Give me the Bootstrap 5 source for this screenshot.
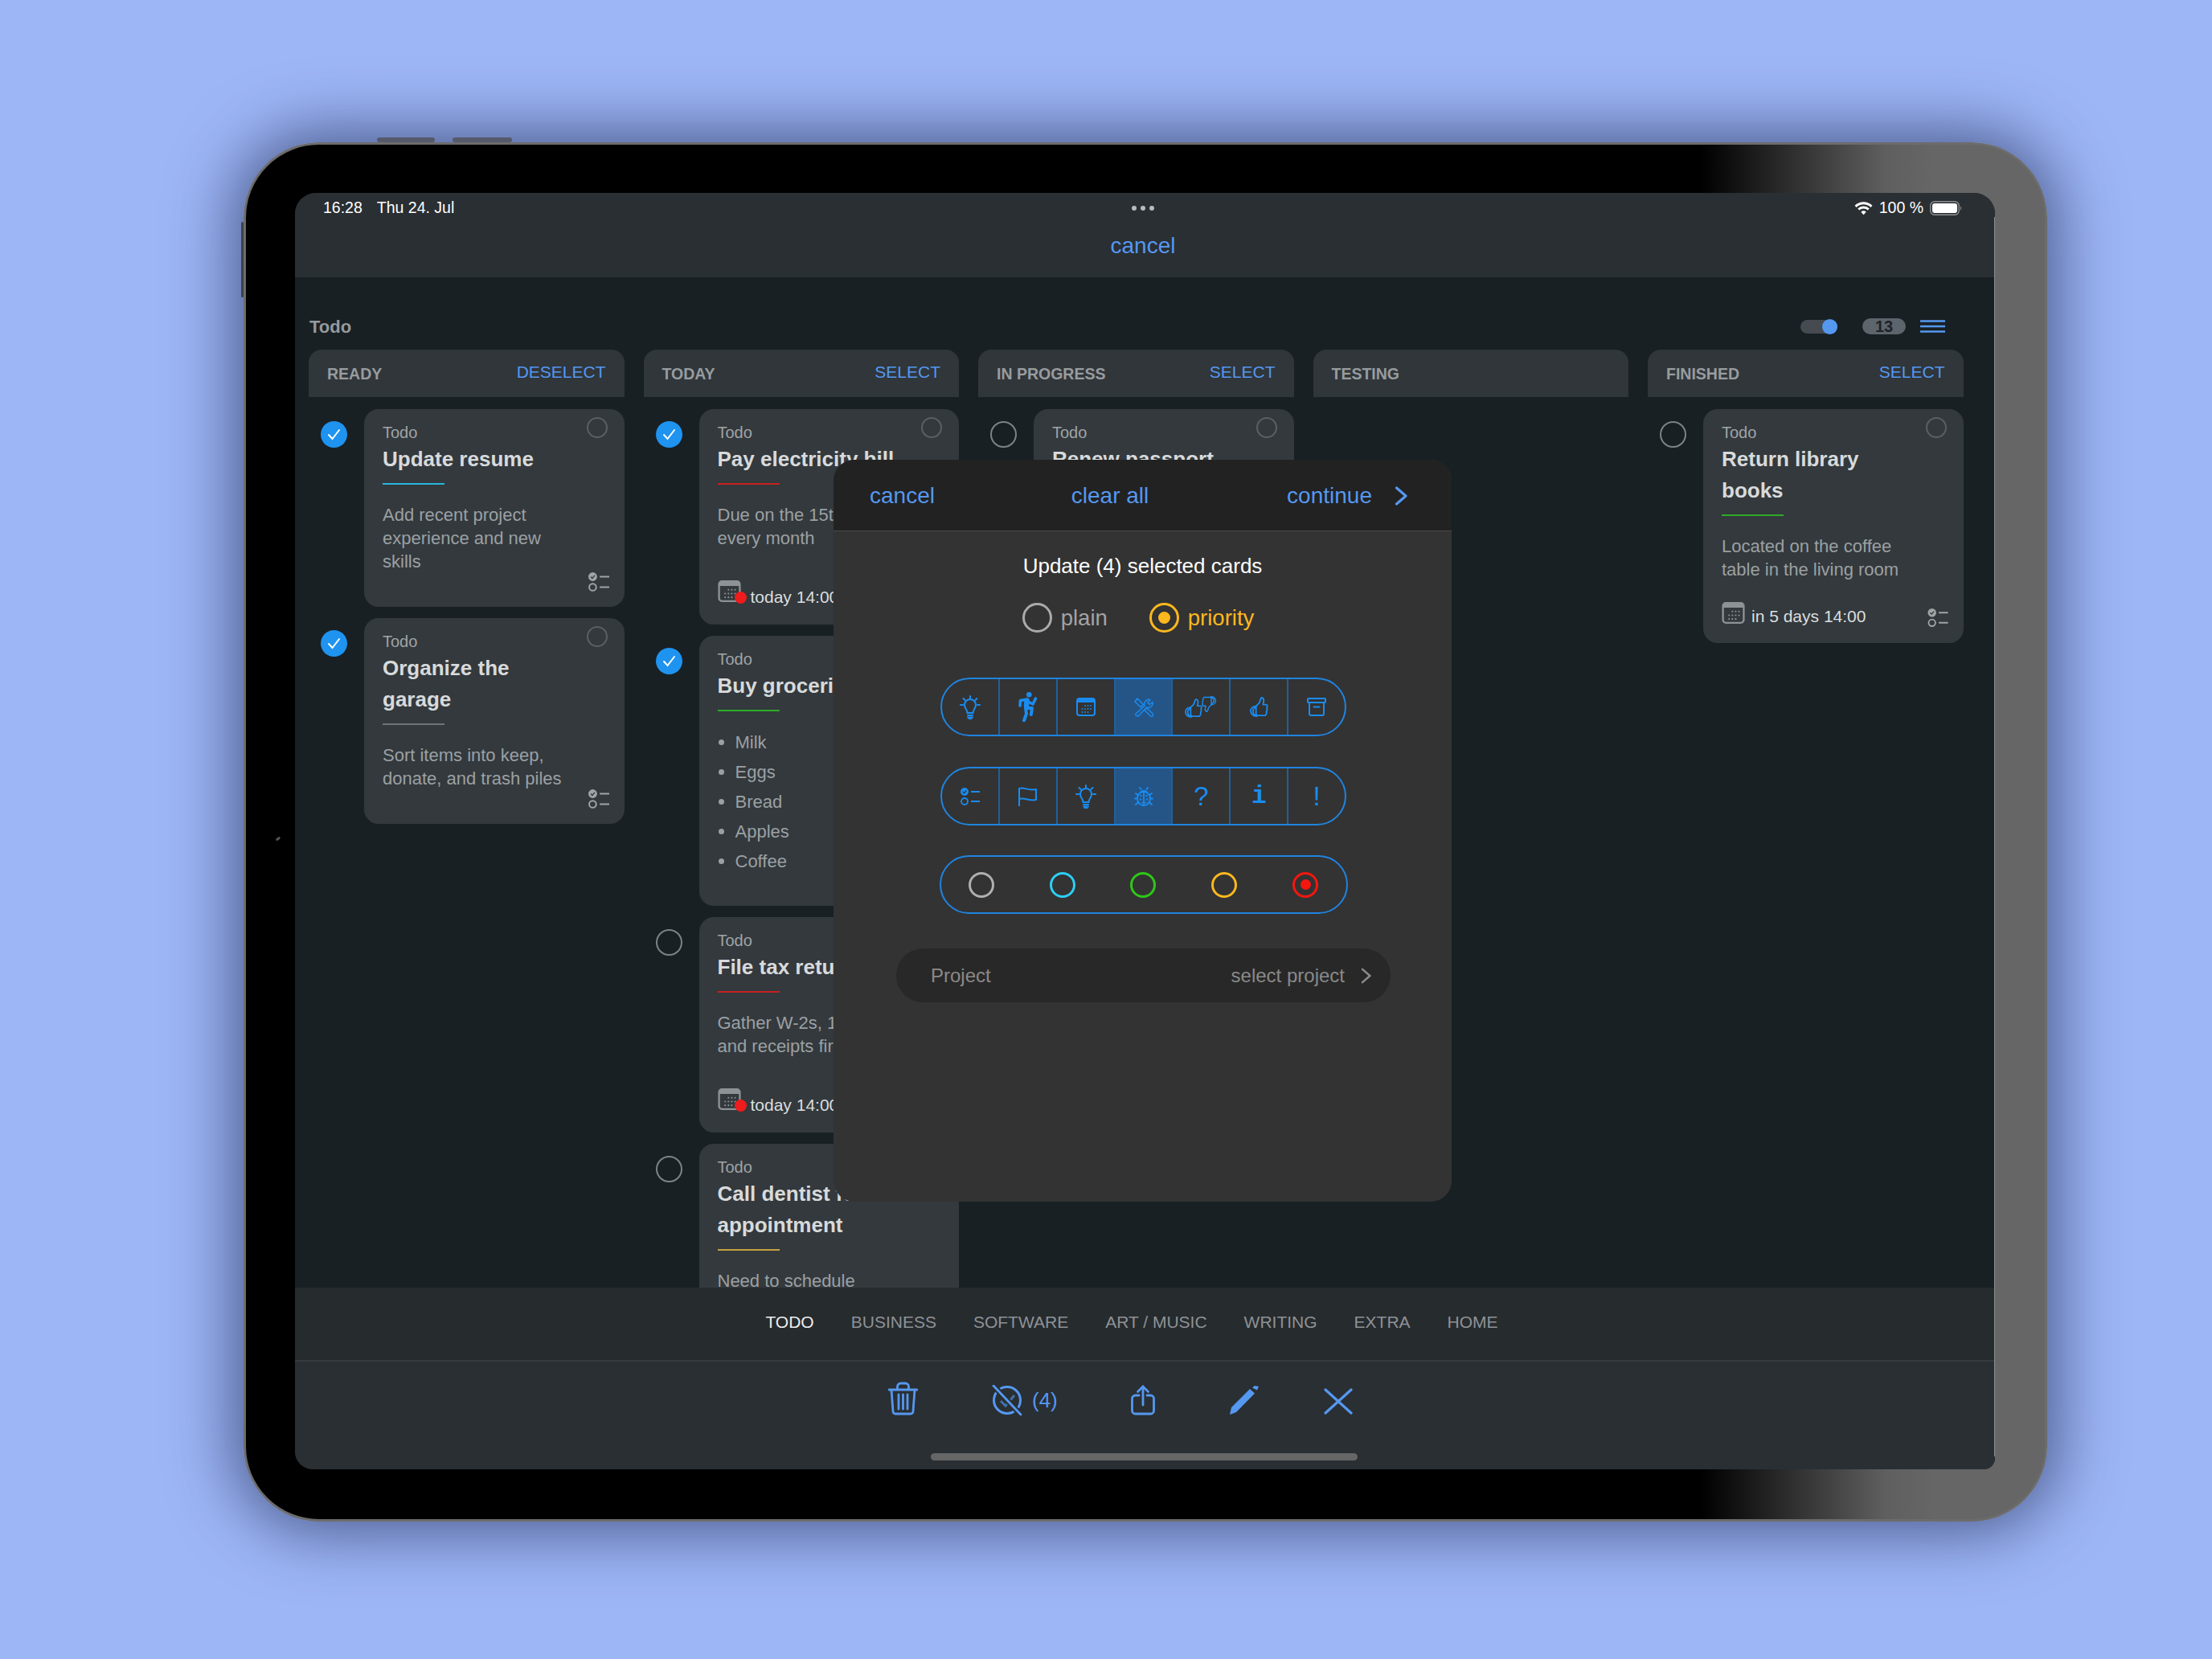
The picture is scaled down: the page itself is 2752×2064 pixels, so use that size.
<!DOCTYPE html>
<html lang="en">
<head>
    <meta charset="UTF-8">
    <meta name="viewport" content="width=device-width, initial-scale=1.0">
    <title>Todo board - Update selected cards</title>
    <!-- Bootstrap CSS -->
    <link href="https://cdn.jsdelivr.net/npm/bootstrap@5.3.0/dist/css/bootstrap.min.css" rel="stylesheet">
    <style>
        body {
            height: 2064px;
            padding: 177px 0 0 303px;
            overflow: hidden;
            background: #9db6f6;
            font-family: "Liberation Sans", Arial, sans-serif;
            color: #d8dadb;
        }

        /* device frame */
        .tablet {
            width: 2244px;
            height: 1716px;
            padding: 60px 62px 62px 61px;
            border: 3px solid #6c6c6c;
            border-radius: 94px;
            background: linear-gradient(90deg, #000 1810px, #5f5f5f 2040px, #666 2100px);
            box-shadow: 0 0 80px 12px rgba(24, 32, 74, .62);
        }
        .hw-btn { position: absolute; background: #55596a; border-radius: 3px; }
        .hw-top-a { left: 163px; top: -9px; width: 72px; height: 6px; }
        .hw-top-b { left: 257px; top: -9px; width: 74px; height: 6px; }
        .hw-side { left: -6px; top: 96px; width: 3px; height: 94px; background: #3f4247; }
        .hw-mark { left: 37px; top: 862px; width: 6px; height: 3px; background: #555; transform: rotate(-40deg); }

        .screen {
            width: 2115px;
            height: 1588px;
            border-radius: 26px 26px 14px 22px;
            background: #182024;
        }
        .screen::after {
            content: "";
            position: absolute;
            top: 30px;
            bottom: 16px;
            right: 0;
            width: 1px;
            background: #8d9092;
        }

        /* top bar */
        .top-bar { height: 105px; flex: none; background: #2a2f33; color: #fff; }
        .status-row { height: 38px; padding: 0 41px 0 35px; font-size: 19.5px; }
        .status-row > div { flex: 1 1 0; }
        .status-date { margin-left: 18px; }
        .nav-row { height: 55px; padding-right: 5px; }
        .blue-link { color: #5598f0; text-decoration: none; }
        .top-cancel { font-size: 28px; line-height: 55px; }

        /* board */
        .board { min-height: 0; padding-top: 47px; }
        .board-head { height: 28px; padding: 0 62px 0 18px; margin-bottom: 15px; }
        .board-title { font-size: 22px; font-weight: 700; color: #969a9e; }
        .mini-toggle { width: 46px; height: 17px; margin-right: 31px; border-radius: 9px; background: #454b50; }
        .mini-knob { width: 19px; height: 19px; border-radius: 50%; background: #5598f0; }
        .count-pill {
            width: 54px;
            height: 20px;
            margin-right: 18px;
            background: #5c646c;
            color: #1f2327;
            font-size: 20px;
            line-height: 20px;
            font-weight: 700;
            text-align: center;
        }
        .columns { padding-left: 17px; gap: 24px; }
        .lane { width: 392.5px; flex: none; }
        .lane-head {
            height: 59px;
            margin-bottom: 15px;
            padding: 0 23px;
            border-radius: 16px 16px 0 0;
            background: #30363a;
        }
        .lane-name { font-size: 19.5px; font-weight: 700; color: #989c9f; padding-top: 3px; }
        .lane-action { font-size: 21px; padding-bottom: 3px; }

        /* cards */
        .card-row { margin-bottom: 14px; }
        .pick {
            width: 33px;
            height: 33px;
            margin: 15px 21px 0 15px;
            flex: none;
            border-radius: 50%;
        }
        .pick-off { border: 2.5px solid #7e8285; }
        .pick-on { background: #1f93f0; }
        .todo-card {
            --bs-card-bg: #33393d;
            --bs-card-border-width: 0;
            --bs-card-border-radius: 18px;
            width: 323.5px;
            flex: none;
            padding: 17px 19px 19px 23px;
        }
        .corner-ring {
            position: absolute;
            top: 10px;
            right: 21px;
            width: 26px;
            height: 26px;
            border: 2px solid #596065;
            border-radius: 50%;
        }
        .card-kind { font-size: 20px; line-height: 24px; color: #a0a4a7; }
        .card-name {
            max-width: 240px;
            margin-top: 2px;
            font-size: 26px;
            line-height: 39px;
            font-weight: 700;
            color: #d8dadb;
        }
        .card-rule { width: 77px; height: 2px; margin: 10px 0 22.5px; }
        .rule-cyan { background: #28b5dc; }
        .rule-red { background: #c8201e; }
        .rule-green { background: #2eaa28; }
        .rule-gray { background: #6d7478; }
        .rule-amber { background: #c9a040; }
        .card-note { max-width: 240px; margin: 0; font-size: 22px; line-height: 29px; color: #9ba0a3; }
        .check-foot { height: 24px; margin-top: -.5px; color: #a0a4a7; }
        .date-foot { height: 30px; margin-top: 26.5px; margin-bottom: 2px; }
        .date-soon { height: 33px; margin-top: 38.5px; margin-bottom: 3px; }
        .date-text { font-size: 21px; line-height: 24px; color: #dcdedf; margin-top: 6px; margin-left: 8px; }
        .date-soon .date-text { margin-top: 9px; margin-left: 12px; }
        .date-icon { width: 29px; height: 27px; color: #8d9295; }
        .red-dot {
            position: absolute;
            right: -7px;
            top: 14px;
            width: 15px;
            height: 15px;
            border-radius: 50%;
            background: #ee1c1c;
        }
        .date-foot .check-icon { margin-top: 8px; }
        .check-icon { color: #a0a4a7; }
        .groceries { margin: -2.5px 0 18px; font-size: 22px; line-height: 37px; color: #9ba0a3; }
        .groceries li { display: flex; align-items: center; gap: 14px; padding-left: 1px; }
        .groceries li::before {
            content: "";
            width: 7px;
            height: 7px;
            border-radius: 50%;
            background: #9ba0a3;
        }

        /* bottom bars */
        .tab-bar {
            height: 92px;
            flex: none;
            padding: 0 33px 4px 0;
            gap: 46px;
            background: #262b2e;
            border-bottom: 2px solid #363a3f;
            font-size: 21px;
            color: #8e9296;
        }
        .tab-on { color: #eceded; }
        .tool-bar { height: 134px; flex: none; padding-top: 25px; background: #2a2f33; color: #5598f0; }
        .tool-row { height: 42px; padding-right: 61px; gap: 92px; }
        .tool-count { margin-left: 12px; width: 31px; font-size: 26px; line-height: 38px; }
        .tool-close { margin-left: -13px; }
        .home-bar { width: 531px; height: 9px; margin: 47px 3px 0 0; border-radius: 5px; background: #666; }

        /* update sheet */
        .sheet {
            position: absolute;
            left: 670px;
            top: 332px;
            width: 769px;
            height: 923px;
            border-radius: 26px;
            background: #333;
        }
        .sheet-head {
            height: 89px;
            padding: 2px 55px 0 45px;
            background: #222;
            border-bottom: 1px solid #4a4a4a;
            font-size: 28px;
        }
        .sheet-clear { margin-left: 2px; }
        .sheet-title { margin-top: 27px; font-size: 26px; line-height: 32px; color: #fff; }
        .kind-row { height: 37px; margin: 30px 0 56px; padding-right: 11px; gap: 52px; font-size: 27.5px; }
        .kind-opt { gap: 11px; color: #a3a3a3; }
        .kind-gold { color: #fdb81e; }
        .kind-ring { width: 37px; height: 37px; border: 3.5px solid #aaa; border-radius: 50%; }
        .kind-gold .kind-ring { border-color: #fdb81e; }
        .kind-dot { width: 15px; height: 15px; border-radius: 50%; background: #fdb81e; }
        .seg {
            width: 505px;
            height: 73px;
            margin: 0 0 38px 2px;
            border: 2px solid #1f84e0;
            color: #1a8cf0;
        }
        .seg-cell { flex: 1 1 0; border-right: 2px solid #215f9b; }
        .seg-cell:last-child { border-right: 0; }
        .seg-active { background: #255587; }
        .seg-glyph { font-size: 33px; line-height: 1; }
        .seg-mono { font-family: "Liberation Mono", monospace; font-size: 31px; font-weight: 700; }
        .seg-dots { width: 508px; margin: -1px 0 43px 2px; }
        .tone { width: 32px; height: 32px; border: 3px solid #b0b0b0; border-radius: 50%; }
        .tone-cyan { border-color: #2bd0f5; }
        .tone-green { border-color: #2ec818; }
        .tone-amber { border-color: #fdb81e; }
        .tone-red { border-color: #f5170f; }
        .tone-dot { width: 13px; height: 13px; border-radius: 50%; background: #f5170f; }
        .project-row {
            width: 615px;
            height: 67px;
            margin-left: 2px;
            padding: 0 24px 0 43px;
            background: #282828;
            font-size: 24px;
            color: #8a8a8a;
        }
        .project-value { gap: 20px; }
    </style>
</head>
<body>

<!-- Icon sprite -->
<svg width="0" height="0" class="d-block" aria-hidden="true">
    <defs>
        <symbol id="ic-bulb" viewBox="0 0 26 30">
            <g fill="none" stroke="currentColor" stroke-width="2" stroke-linecap="round">
                <path d="M13 1v3M4.500 4l2 2M21.500 4l-2 2M1 12h3M22 12h3"/>
                <path d="M9.500 22c0-4-3.500-5.500-3.500-10a7 7 0 0 1 14 0c0 4.500-3.500 6-3.500 10z"/>
                <path d="M10 25h6M10 27.500h6M11.500 29.500h3"/>
            </g>
        </symbol>
        <symbol id="ic-runner" viewBox="0 0 23 37">
            <circle cx="13.300" cy="3.300" r="3.300" fill="currentColor"/>
            <g fill="none" stroke="currentColor" stroke-linecap="round" stroke-linejoin="round">
                <path stroke-width="3.600" d="M9 9.500 2.500 10.500 2 17M14 13l4 2 3.500-7"/>
                <path stroke-width="6.500" d="M10.500 10.500 10 17"/>
                <path stroke-width="4" d="M9 20h8l-1.200 8M9 20l1 7-3 8.500"/>
            </g>
        </symbol>
        <symbol id="ic-cal" viewBox="0 0 24 23">
            <rect x="1" y="1" width="22" height="21" rx="3" fill="none" stroke="currentColor" stroke-width="2"/>
            <path d="M1 4a3 3 0 0 1 3-3h16a3 3 0 0 1 3 3v2H1z" fill="currentColor"/>
            <g fill="currentColor">
                <circle cx="11" cy="10" r=".9"/><circle cx="14.500" cy="10" r=".9"/><circle cx="18" cy="10" r=".9"/>
                <circle cx="7.500" cy="14" r=".9"/><circle cx="11" cy="14" r=".9"/><circle cx="14.500" cy="14" r=".9"/><circle cx="18" cy="14" r=".9"/>
                <circle cx="7.500" cy="18" r=".9"/><circle cx="11" cy="18" r=".9"/><circle cx="14.500" cy="18" r=".9"/>
            </g>
        </symbol>
        <symbol id="ic-tools" viewBox="0 0 24 24">
            <g fill="none" stroke="currentColor" stroke-width="1.500" stroke-linejoin="round" stroke-linecap="round">
                <path d="M23 5.500l-3.700 3-2.500-2.300 3-3.700a5.500 5.500 0 0 0-6.500 7.500L2 20a2.500 2.500 0 0 0 3 3l10.700-11a5.500 5.500 0 0 0 7.300-6.500z"/>
                <path d="M1 5l3-4 7.500 7.500-3.300 3.300z"/>
                <path d="M13 15.500l2.800-2.800 7.500 7.500a2 2 0 0 1-2.800 2.800z"/>
            </g>
        </symbol>
        <symbol id="ic-thumb" viewBox="0 0 24 26">
            <g fill="none" stroke="currentColor" stroke-width="1.900" stroke-linejoin="round" stroke-linecap="round">
                <path d="M8 12l4-4c1.500-2 1-5 3-7 2 0 3 2 3 4 0 2-1 4-1 5h4c2 0 2 3 1 4 1 2 0 4-.5 5 .5 2-.5 4-1.500 5h-9c-2 0-3-1-3-2z"/>
                <path d="M8 12c-4.500 0-7 3-7 6s2.500 7 7 7M8 13.500c-2.500 1-4 3-4 4.500 0 3 2 6 5 7"/>
            </g>
        </symbol>
        <symbol id="ic-archive" viewBox="0 0 24 23">
            <g fill="none" stroke="currentColor" stroke-width="2" stroke-linecap="round">
                <rect x="1" y="1" width="22" height="5" rx="1"/>
                <path d="M3 6v14a2 2 0 0 0 2 2h14a2 2 0 0 0 2-2V6M8.500 11.500h7"/>
            </g>
        </symbol>
        <symbol id="ic-checklist" viewBox="0 0 24 22">
            <circle cx="5" cy="5" r="5" fill="currentColor"/>
            <path d="M2.800 5l1.700 1.800L7.300 3.500" fill="none" stroke="#333" stroke-width="1.200"/>
            <circle cx="5" cy="17" r="4" fill="none" stroke="currentColor" stroke-width="1.800"/>
            <path d="M13 5h11M13 17h11" stroke="currentColor" stroke-width="2"/>
        </symbol>
        <symbol id="ic-flag" viewBox="0 0 23 24">
            <path d="M1 24V2c6-2 11 3 21 1v13c-8 2-14-3-21-1" fill="none" stroke="currentColor" stroke-width="2" stroke-linejoin="round"/>
        </symbol>
        <symbol id="ic-bug" viewBox="0 0 24 24">
            <path d="M7 7c1-4 9-4 10 0z" fill="currentColor"/>
            <g fill="none" stroke="currentColor" stroke-width="1.800" stroke-linecap="round">
                <path d="M8.500 3 7 1M15.500 3 17 1M4.500 10 2 8M19.500 10 22 8M4 14.500H1M20 14.500h3M5 19l-3 3M19 19l3 3"/>
                <ellipse cx="12" cy="14.500" rx="8" ry="8.500"/>
                <path d="M12 7v16"/>
            </g>
            <g fill="currentColor">
                <circle cx="8.500" cy="11" r="1.200"/><circle cx="15.500" cy="11" r="1.200"/>
                <circle cx="8" cy="15.500" r="1.200"/><circle cx="16" cy="15.500" r="1.200"/>
                <circle cx="9.800" cy="19.500" r="1.100"/><circle cx="14.200" cy="19.500" r="1.100"/>
            </g>
        </symbol>
        <symbol id="ic-chevron" viewBox="0 0 16 24">
            <path d="M2.500 2 14 12 2.500 22" fill="none" stroke="currentColor" stroke-width="3.200" stroke-linecap="round" stroke-linejoin="round"/>
        </symbol>
    </defs>
</svg>

<div class="tablet position-relative">
    <span class="hw-btn hw-top-a"></span>
    <span class="hw-btn hw-top-b"></span>
    <span class="hw-btn hw-side"></span>
    <span class="hw-btn hw-mark"></span>

    <div class="screen position-relative d-flex flex-column overflow-hidden">

        <!-- Status bar and cancel -->
        <div class="top-bar">
            <div class="status-row d-flex align-items-center">
                <div><span>16:28</span><span class="status-date">Thu 24. Jul</span></div>
                <div class="d-flex justify-content-center">
                    <svg width="30" height="6" viewBox="0 0 30 6"><g fill="#b9bbbd"><circle cx="4" cy="3" r="3"/><circle cx="15" cy="3" r="3"/><circle cx="26" cy="3" r="3"/></g></svg>
                </div>
                <div class="d-flex justify-content-end align-items-center">
                    <svg width="23" height="17" viewBox="0 0 22 16" class="me-2">
                        <g fill="none" stroke="#fff" stroke-width="2.800">
                            <path d="M1.500 5.500a13.500 13.500 0 0 1 19 0M5 9a8.500 8.500 0 0 1 12 0"/>
                        </g>
                        <path d="M8 12a4 4 0 0 1 6 0l-3 3.500z" fill="#fff"/>
                    </svg>
                    <span>100 %</span>
                    <svg width="40" height="18" viewBox="0 0 40 18" class="ms-2">
                        <rect x=".7" y=".7" width="35.500" height="16.600" rx="5" fill="none" stroke="#8e9093" stroke-width="1.400"/>
                        <rect x="3" y="3" width="31" height="12" rx="3" fill="#fff"/>
                        <path d="M38 6.500c1.500.5 1.500 4.500 0 5z" fill="#8e9093"/>
                    </svg>
                </div>
            </div>
            <div class="nav-row text-center"><a class="blue-link top-cancel" href="#">cancel</a></div>
        </div>

        <!-- Board -->
        <div class="board flex-grow-1 overflow-hidden">
            <div class="board-head d-flex align-items-center">
                <div class="board-title me-auto">Todo</div>
                <div class="mini-toggle d-flex align-items-center justify-content-end"><span class="mini-knob"></span></div>
                <div class="count-pill rounded-pill">13</div>
                <svg width="31" height="16" viewBox="0 0 31 16"><path d="M0 1.500h31M0 8h31M0 14.500h31" stroke="#5598f0" stroke-width="2.500"/></svg>
            </div>

            <div class="columns d-flex align-items-start">

                <!-- Ready -->
                <div class="lane">
                    <div class="lane-head d-flex justify-content-between align-items-center">
                        <span class="lane-name">READY</span>
                        <a class="blue-link lane-action" href="#">DESELECT</a>
                    </div>
                    <div class="card-row d-flex align-items-start">
                        <span class="pick pick-on d-flex align-items-center justify-content-center"><svg width="17" height="15" viewBox="0 0 17 15"><path d="M2 8l4.500 5L15 2" fill="none" stroke="#fff" stroke-width="2" stroke-linecap="round"/></svg></span>
                        <div class="card todo-card">
                            <span class="corner-ring"></span>
                            <div class="card-kind">Todo</div>
                            <div class="card-name">Update resume</div>
                            <div class="card-rule rule-cyan"></div>
                            <p class="card-note">Add recent project experience and new skills</p>
                            <div class="check-foot d-flex justify-content-end"><svg width="26" height="24" class="check-icon"><use href="#ic-checklist"/></svg></div>
                        </div>
                    </div>
                    <div class="card-row d-flex align-items-start">
                        <span class="pick pick-on d-flex align-items-center justify-content-center"><svg width="17" height="15" viewBox="0 0 17 15"><path d="M2 8l4.500 5L15 2" fill="none" stroke="#fff" stroke-width="2" stroke-linecap="round"/></svg></span>
                        <div class="card todo-card">
                            <span class="corner-ring"></span>
                            <div class="card-kind">Todo</div>
                            <div class="card-name">Organize the garage</div>
                            <div class="card-rule rule-gray"></div>
                            <p class="card-note">Sort items into keep, donate, and trash piles</p>
                            <div class="check-foot d-flex justify-content-end"><svg width="26" height="24" class="check-icon"><use href="#ic-checklist"/></svg></div>
                        </div>
                    </div>
                </div>

                <!-- Today -->
                <div class="lane">
                    <div class="lane-head d-flex justify-content-between align-items-center">
                        <span class="lane-name">TODAY</span>
                        <a class="blue-link lane-action" href="#">SELECT</a>
                    </div>
                    <div class="card-row d-flex align-items-start">
                        <span class="pick pick-on d-flex align-items-center justify-content-center"><svg width="17" height="15" viewBox="0 0 17 15"><path d="M2 8l4.500 5L15 2" fill="none" stroke="#fff" stroke-width="2" stroke-linecap="round"/></svg></span>
                        <div class="card todo-card">
                            <span class="corner-ring"></span>
                            <div class="card-kind">Todo</div>
                            <div class="card-name">Pay electricity bill</div>
                            <div class="card-rule rule-red"></div>
                            <p class="card-note">Due on the 15th of every month</p>
                            <div class="date-soon d-flex align-items-start">
                                <span class="date-icon position-relative"><svg width="29" height="27" class="d-block"><use href="#ic-cal"/></svg><span class="red-dot"></span></span>
                                <span class="date-text">today 14:00</span>
                            </div>
                        </div>
                    </div>
                    <div class="card-row d-flex align-items-start">
                        <span class="pick pick-on d-flex align-items-center justify-content-center"><svg width="17" height="15" viewBox="0 0 17 15"><path d="M2 8l4.500 5L15 2" fill="none" stroke="#fff" stroke-width="2" stroke-linecap="round"/></svg></span>
                        <div class="card todo-card">
                            <span class="corner-ring"></span>
                            <div class="card-kind">Todo</div>
                            <div class="card-name">Buy groceries</div>
                            <div class="card-rule rule-green"></div>
                            <ul class="groceries list-unstyled">
                                <li>Milk</li>
                                <li>Eggs</li>
                                <li>Bread</li>
                                <li>Apples</li>
                                <li>Coffee</li>
                            </ul>
                        </div>
                    </div>
                    <div class="card-row d-flex align-items-start">
                        <span class="pick pick-off"></span>
                        <div class="card todo-card">
                            <span class="corner-ring"></span>
                            <div class="card-kind">Todo</div>
                            <div class="card-name">File tax return</div>
                            <div class="card-rule rule-red"></div>
                            <p class="card-note">Gather W-2s, 1099s, and receipts first</p>
                            <div class="date-soon d-flex align-items-start">
                                <span class="date-icon position-relative"><svg width="29" height="27" class="d-block"><use href="#ic-cal"/></svg><span class="red-dot"></span></span>
                                <span class="date-text">today 14:00</span>
                            </div>
                        </div>
                    </div>
                    <div class="card-row d-flex align-items-start">
                        <span class="pick pick-off"></span>
                        <div class="card todo-card">
                            <span class="corner-ring"></span>
                            <div class="card-kind">Todo</div>
                            <div class="card-name">Call dentist for appointment</div>
                            <div class="card-rule rule-amber"></div>
                            <p class="card-note">Need to schedule</p>
                        </div>
                    </div>
                </div>

                <!-- In progress -->
                <div class="lane">
                    <div class="lane-head d-flex justify-content-between align-items-center">
                        <span class="lane-name">IN PROGRESS</span>
                        <a class="blue-link lane-action" href="#">SELECT</a>
                    </div>
                    <div class="card-row d-flex align-items-start">
                        <span class="pick pick-off"></span>
                        <div class="card todo-card">
                            <span class="corner-ring"></span>
                            <div class="card-kind">Todo</div>
                            <div class="card-name">Renew passport</div>
                            <div class="card-rule rule-cyan"></div>
                            <p class="card-note">Book an appointment</p>
                        </div>
                    </div>
                </div>

                <!-- Testing -->
                <div class="lane">
                    <div class="lane-head d-flex align-items-center">
                        <span class="lane-name">TESTING</span>
                    </div>
                </div>

                <!-- Finished -->
                <div class="lane">
                    <div class="lane-head d-flex justify-content-between align-items-center">
                        <span class="lane-name">FINISHED</span>
                        <a class="blue-link lane-action" href="#">SELECT</a>
                    </div>
                    <div class="card-row d-flex align-items-start">
                        <span class="pick pick-off"></span>
                        <div class="card todo-card">
                            <span class="corner-ring"></span>
                            <div class="card-kind">Todo</div>
                            <div class="card-name">Return library books</div>
                            <div class="card-rule rule-green"></div>
                            <p class="card-note">Located on the coffee table in the living room</p>
                            <div class="date-foot d-flex align-items-start">
                                <span class="date-icon"><svg width="29" height="27" class="d-block"><use href="#ic-cal"/></svg></span>
                                <span class="date-text me-auto">in 5 days 14:00</span>
                                <svg width="26" height="23" class="check-icon"><use href="#ic-checklist"/></svg>
                            </div>
                        </div>
                    </div>
                </div>
            </div>
        </div>

        <!-- Tabs -->
        <div class="tab-bar d-flex justify-content-center align-items-center">
            <span class="tab-on">TODO</span>
            <span>BUSINESS</span>
            <span>SOFTWARE</span>
            <span>ART / MUSIC</span>
            <span>WRITING</span>
            <span>EXTRA</span>
            <span>HOME</span>
        </div>

        <!-- Toolbar -->
        <div class="tool-bar d-flex flex-column align-items-center">
            <div class="tool-row d-flex justify-content-center">
                <svg width="37" height="42" viewBox="0 0 37 42">
                    <path d="M1 10h35M11.500 10V6a4 4 0 0 1 4-4h6a4 4 0 0 1 4 4v4M4 10l2 27a3 3 0 0 0 3 3h19a3 3 0 0 0 3-3l2-27M13 16v18M18.500 16v18M24 16v18" fill="none" stroke="currentColor" stroke-width="2.800" stroke-linecap="round"/>
                </svg>
                <div class="d-flex align-items-end">
                    <svg width="38" height="38" viewBox="0 0 38 38">
                        <circle cx="19" cy="19" r="16.500" fill="none" stroke="currentColor" stroke-width="3"/>
                        <path d="M11 20l6 6L28 13" fill="none" stroke="#3f70a8" stroke-width="3"/>
                        <path d="M2 1l34 36" stroke="#2a2f33" stroke-width="7"/>
                        <path d="M2 1l34 36" stroke="currentColor" stroke-width="2.800" stroke-linecap="round"/>
                    </svg>
                    <span class="tool-count">(4)</span>
                </div>
                <svg width="30" height="38" viewBox="0 0 30 38" class="mt-1">
                    <path d="M10 13H5.500a4 4 0 0 0-4 4v15a4 4 0 0 0 4 4h19a4 4 0 0 0 4-4V17a4 4 0 0 0-4-4H20M15 25V2M8.500 8.500 15 2l6.500 6.500" fill="none" stroke="currentColor" stroke-width="2.800" stroke-linecap="round"/>
                </svg>
                <svg width="39" height="37" viewBox="0 0 39 37" class="mt-1">
                    <path d="M1 37l2-9L26 5l6 5.500L9 34z" fill="currentColor"/>
                    <path d="M29 3.500 32 1l5 1-2 4.500z" fill="currentColor"/>
                </svg>
                <svg width="36" height="33" viewBox="0 0 36 33" class="tool-close mt-2">
                    <path d="M2 2l32 29M34 2 2 31" fill="none" stroke="currentColor" stroke-width="3.200" stroke-linecap="round"/>
                </svg>
            </div>
            <div class="home-bar"></div>
        </div>

        <!-- Update sheet, lies over the board -->
        <div class="sheet d-flex flex-column align-items-center overflow-hidden">
            <div class="sheet-head w-100 d-flex justify-content-between align-items-center">
                <a class="blue-link" href="#">cancel</a>
                <a class="blue-link sheet-clear" href="#">clear all</a>
                <a class="blue-link d-flex align-items-center gap-4 ps-1" href="#">continue <svg width="16" height="24" class="ms-1"><use href="#ic-chevron"/></svg></a>
            </div>
            <div class="sheet-title">Update (4) selected cards</div>

            <div class="kind-row d-flex align-items-center">
                <div class="kind-opt d-flex align-items-center"><span class="kind-ring"></span>plain</div>
                <div class="kind-opt kind-gold d-flex align-items-center"><span class="kind-ring d-flex align-items-center justify-content-center"><span class="kind-dot"></span></span>priority</div>
            </div>

            <div class="seg d-flex rounded-pill overflow-hidden">
                <div class="seg-cell d-flex align-items-center justify-content-center"><svg width="26" height="30"><use href="#ic-bulb"/></svg></div>
                <div class="seg-cell d-flex align-items-center justify-content-center"><svg width="23" height="37"><use href="#ic-runner"/></svg></div>
                <div class="seg-cell d-flex align-items-center justify-content-center"><svg width="24" height="23"><use href="#ic-cal"/></svg></div>
                <div class="seg-cell seg-active d-flex align-items-center justify-content-center"><svg width="24" height="24"><use href="#ic-tools"/></svg></div>
                <div class="seg-cell d-flex align-items-center justify-content-center">
                    <svg width="40" height="27" viewBox="0 0 40 27">
                        <use href="#ic-thumb" x="0" y="3" width="22" height="24"/>
                        <use href="#ic-thumb" x="-40" y="-20" width="20" height="20" transform="scale(-1 -1) translate(0 0)"/>
                    </svg>
                </div>
                <div class="seg-cell d-flex align-items-center justify-content-center"><svg width="23" height="25"><use href="#ic-thumb"/></svg></div>
                <div class="seg-cell d-flex align-items-center justify-content-center"><svg width="24" height="23"><use href="#ic-archive"/></svg></div>
            </div>

            <div class="seg d-flex rounded-pill overflow-hidden">
                <div class="seg-cell d-flex align-items-center justify-content-center"><svg width="24" height="22"><use href="#ic-checklist"/></svg></div>
                <div class="seg-cell d-flex align-items-center justify-content-center"><svg width="23" height="24"><use href="#ic-flag"/></svg></div>
                <div class="seg-cell d-flex align-items-center justify-content-center"><svg width="26" height="30"><use href="#ic-bulb"/></svg></div>
                <div class="seg-cell seg-active d-flex align-items-center justify-content-center"><svg width="24" height="24"><use href="#ic-bug"/></svg></div>
                <div class="seg-cell seg-glyph d-flex align-items-center justify-content-center">?</div>
                <div class="seg-cell seg-glyph seg-mono d-flex align-items-center justify-content-center">i</div>
                <div class="seg-cell seg-glyph d-flex align-items-center justify-content-center">!</div>
            </div>

            <div class="seg seg-dots d-flex rounded-pill">
                <div class="flex-fill d-flex align-items-center justify-content-center"><span class="tone"></span></div>
                <div class="flex-fill d-flex align-items-center justify-content-center"><span class="tone tone-cyan"></span></div>
                <div class="flex-fill d-flex align-items-center justify-content-center"><span class="tone tone-green"></span></div>
                <div class="flex-fill d-flex align-items-center justify-content-center"><span class="tone tone-amber"></span></div>
                <div class="flex-fill d-flex align-items-center justify-content-center"><span class="tone tone-red d-flex align-items-center justify-content-center"><span class="tone-dot"></span></span></div>
            </div>

            <div class="project-row d-flex justify-content-between align-items-center rounded-pill">
                <span>Project</span>
                <span class="project-value d-flex align-items-center">select project <svg width="13" height="20"><use href="#ic-chevron"/></svg></span>
            </div>
        </div>
    </div>
</div>

<!-- Bootstrap JS -->
<script src="https://cdn.jsdelivr.net/npm/bootstrap@5.3.0/dist/js/bootstrap.bundle.min.js"></script>
</body>
</html>
